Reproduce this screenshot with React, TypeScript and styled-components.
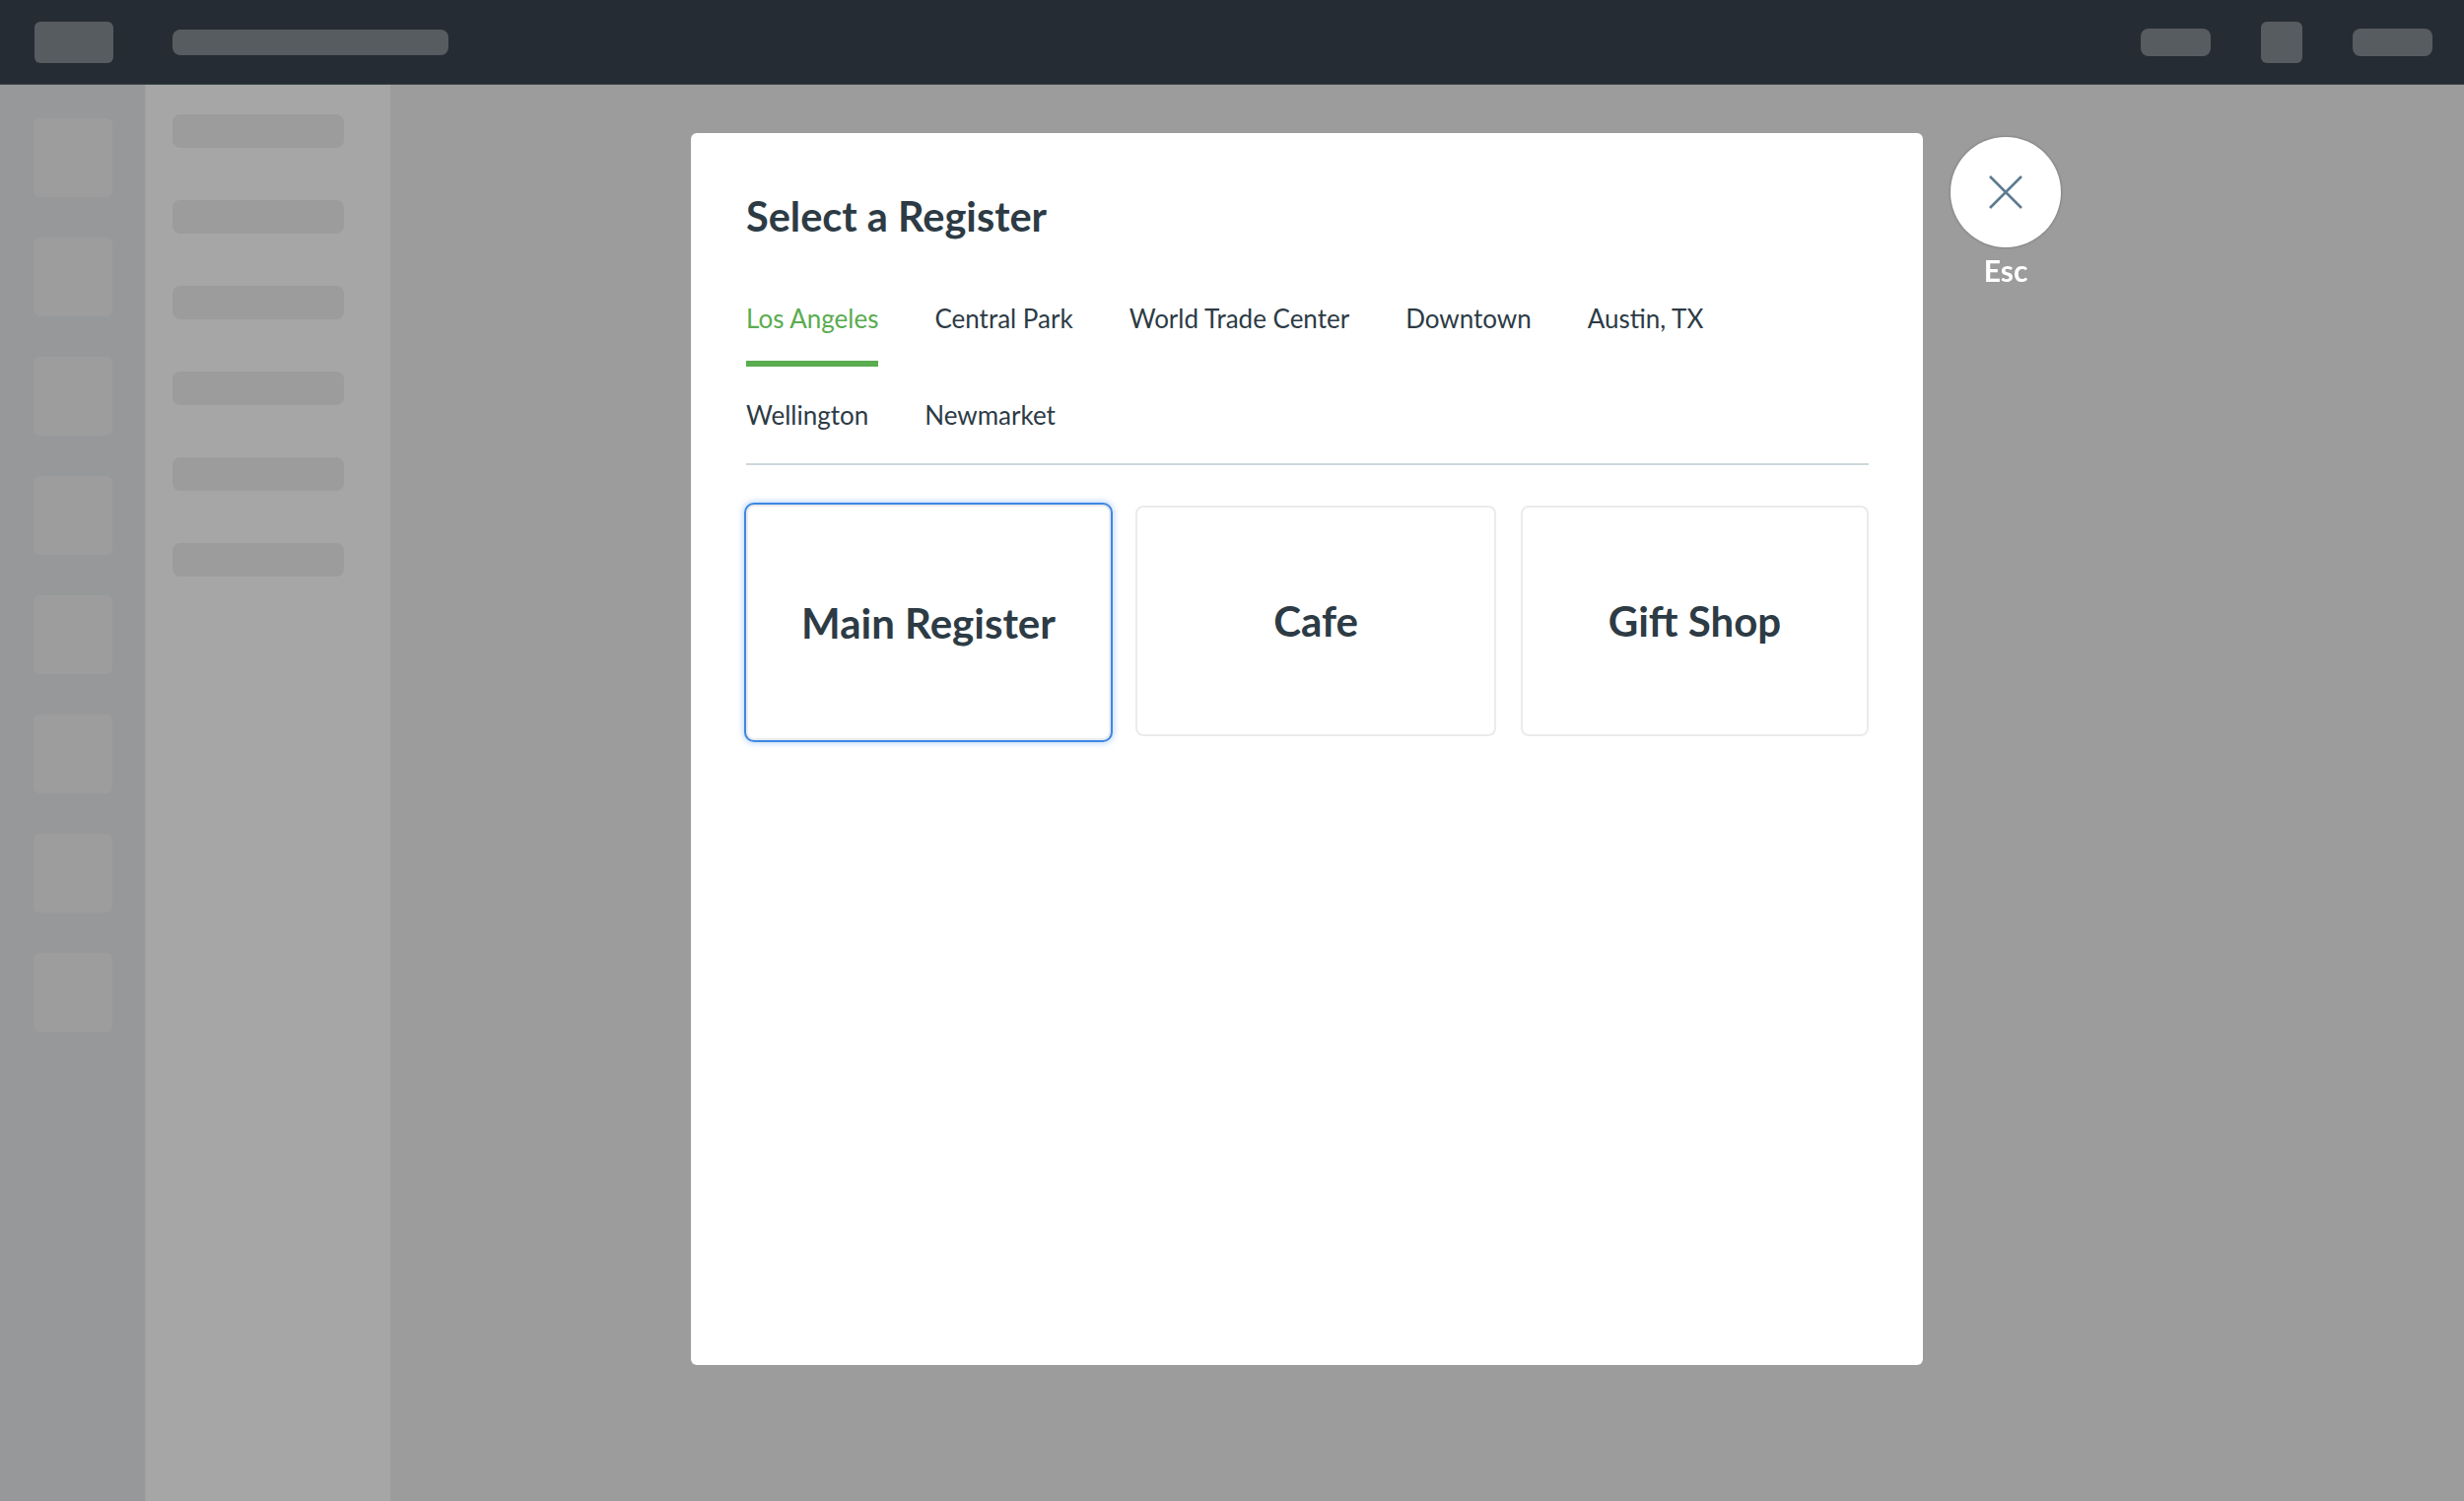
import React, { useState } from 'react';
import styled, { createGlobalStyle } from 'styled-components';

const GlobalStyle = createGlobalStyle`
  html, body {
    margin: 0;
    padding: 0;
  }
  body {
    font-family: Lato, "Open Sans", sans-serif;
    background: #9b9c9b;
  }
`

const locations = [
    'Los Angeles',
    'Central Park',
    'World Trade Center',
    'Downtown',
    'Austin, TX',
    'Wellington',
    'Newmarket',
]

const registers = ['Main Register', 'Cafe', 'Gift Shop']

const Page = styled.div`
  width: 2500px;
  height: 1523px;
  display: flex;
  flex-direction: column;
  background: #9b9c9b;
  overflow: hidden;
`

const TopBar = styled.header`
  height: 86px;
  flex-shrink: 0;
  display: flex;
  align-items: center;
  padding: 0 32px 0 35px;
  background: #252c34;
  border-bottom: 1px solid #3a4148;
  box-sizing: border-box;
`

const Placeholder = styled.div<{ w: number; h: number; r?: number }>`
  width: ${p => p.w}px;
  height: ${p => p.h}px;
  border-radius: ${p => p.r ?? 6}px;
  background: #575c60;
  flex-shrink: 0;
`

const Logo = styled(Placeholder)`
  margin-right: 60px;
`

const Spacer = styled.div`
  flex: 1;
`

const TopActions = styled.div`
  display: flex;
  align-items: center;
  gap: 51px;
`

const Body = styled.div`
  flex: 1;
  display: flex;
`

const SideNav = styled.nav`
  width: 148px;
  display: flex;
  flex-direction: column;
  align-items: center;
  gap: 41px;
  padding-top: 34px;
  background: #97989a;
  border-right: 1px solid #a0a1a3;
  box-sizing: border-box;
`

const NavItem = styled.div`
  width: 80px;
  height: 80px;
  border-radius: 6px;
  background: #9c9d9c;
`

const SubNav = styled.div`
  width: 248px;
  display: flex;
  flex-direction: column;
  gap: 53px;
  padding: 30px 0 0 27px;
  background: #a6a6a6;
  box-sizing: border-box;
`

const SubNavItem = styled.div`
  width: 174px;
  height: 34px;
  border-radius: 8px;
  background: #9b9c9b;
`

const Main = styled.main`
  flex: 1;
  background: #9b9c9b;
`

const Overlay = styled.div`
  position: fixed;
  inset: 0;
  display: flex;
  align-items: center;
  justify-content: center;
  padding: 0 0 3px 152px;
`

const ModalWrap = styled.div`
  position: relative;
`

const Modal = styled.div`
  width: 1250px;
  height: 1250px;
  box-sizing: border-box;
  background: #fff;
  border-radius: 6px;
  padding: 59px 55px 0 56px;
`

const Title = styled.h2`
  margin: 0;
  font-size: 41.5px;
  line-height: 50px;
  font-weight: 700;
  color: #2d3b45;
`

const Tabs = styled.div`
  display: flex;
  flex-wrap: wrap;
  column-gap: 57px;
  row-gap: 7px;
  margin-top: 37px;
  border-bottom: 2px solid #cfd7db;
`

const Tab = styled.button<{ active?: boolean }>`
  border: none;
  background: none;
  padding: 27px 0 27px;
  font-family: Lato, sans-serif;
  font-size: 26px;
  line-height: 31px;
  font-weight: 400;
  color: ${p => (p.active ? '#5aac50' : '#2d3b45')};
  border-bottom: 6px solid ${p => (p.active ? '#5aac50' : 'transparent')};
  cursor: pointer;
`

const Cards = styled.div`
  display: grid;
  grid-template-columns: 370px 366px 353px;
  justify-content: space-between;
  align-items: start;
  margin-top: 40px;
`

const Card = styled.button<{ selected?: boolean }>`
  height: ${p => (p.selected ? 239 : 234)}px;
  margin-top: ${p => (p.selected ? 0 : 1)}px;
  border: 2px solid #ebebeb;
  border-radius: 8px;
  background: #fff;
  font-family: Lato, sans-serif;
  font-size: 42px;
  font-weight: 700;
  color: #2d3b45;
  cursor: pointer;
  box-shadow: ${p => (p.selected ? '0 0 0 2px #3d87e4, 0 0 6px 3px rgba(61, 135, 228, 0.35)' : 'none')};
`

const CloseArea = styled.div`
  position: absolute;
  top: 4px;
  left: calc(100% + 28px);
  display: flex;
  flex-direction: column;
  align-items: center;
`

const CloseButton = styled.button`
  width: 112px;
  height: 112px;
  border-radius: 50%;
  border: none;
  background: #fff;
  box-shadow: 0 0 2px 1px rgba(0, 0, 0, 0.15);
  display: flex;
  align-items: center;
  justify-content: center;
  cursor: pointer;
`

const EscLabel = styled.span`
  margin-top: 5px;
  font-size: 30px;
  line-height: 1.2;
  font-weight: 700;
  color: #fff;
`

export default function App() {
    const [tab, setTab] = useState(0)
    const [selected, setSelected] = useState(0)

    return (
        <Page>
            <GlobalStyle/>
            <TopBar>
                <Logo w={80} h={42}/>
                <Placeholder w={280} h={26} r={8}/>
                <Spacer/>
                <TopActions>
                    <Placeholder w={71} h={28} r={8}/>
                    <Placeholder w={42} h={42}/>
                    <Placeholder w={81} h={28} r={8}/>
                </TopActions>
            </TopBar>
            <Body>
                <SideNav>
                    {Array.from({ length: 8 }).map((_, i) => <NavItem key={i}/>)}
                </SideNav>
                <SubNav>
                    {Array.from({ length: 6 }).map((_, i) => <SubNavItem key={i}/>)}
                </SubNav>
                <Main/>
            </Body>

            <Overlay>
                <ModalWrap>
                    <Modal>
                        <Title>Select a Register</Title>
                        <Tabs>
                            {locations.map((name, i) => (
                                <Tab key={name} active={i === tab} onClick={() => setTab(i)}>
                                    {name}
                                </Tab>
                            ))}
                        </Tabs>
                        <Cards>
                            {registers.map((name, i) => (
                                <Card key={name} selected={i === selected} onClick={() => setSelected(i)}>
                                    {name}
                                </Card>
                            ))}
                        </Cards>
                    </Modal>
                    <CloseArea>
                        <CloseButton aria-label="Close">
                            <svg width="34" height="34" viewBox="0 0 34 34">
                                <path d="M1 1 L33 33 M33 1 L1 33" stroke="#5d7b8f" strokeWidth="2.6" fill="none"/>
                            </svg>
                        </CloseButton>
                        <EscLabel>Esc</EscLabel>
                    </CloseArea>
                </ModalWrap>
            </Overlay>
        </Page>
    );
}
